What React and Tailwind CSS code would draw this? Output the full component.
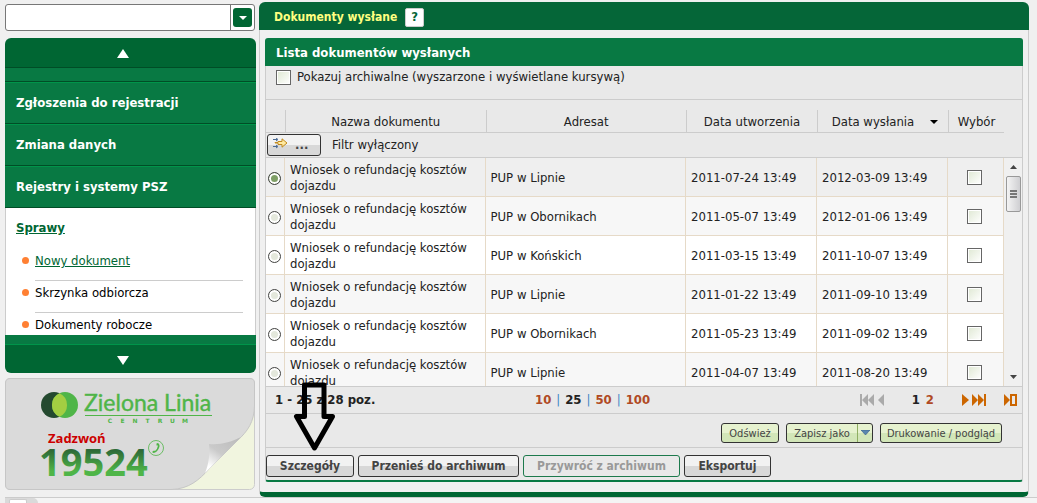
import React, { useState } from "react";

const menuItems = ["Zgłoszenia do rejestracji", "Zmiana danych", "Rejestry i systemy PSZ"];

const subItems = ["Nowy dokument", "Skrzynka odbiorcza", "Dokumenty robocze"];

const documents = [
  { id: 1, office: "PUP w Lipnie", created: "2011-07-24 13:49", sent: "2012-03-09 13:49" },
  { id: 2, office: "PUP w Obornikach", created: "2011-05-07 13:49", sent: "2012-01-06 13:49" },
  { id: 3, office: "PUP w Końskich", created: "2011-03-15 13:49", sent: "2011-10-07 13:49" },
  { id: 4, office: "PUP w Lipnie", created: "2011-01-22 13:49", sent: "2011-09-10 13:49" },
  { id: 5, office: "PUP w Obornikach", created: "2011-05-23 13:49", sent: "2011-09-02 13:49" },
  { id: 6, office: "PUP w Lipnie", created: "2011-04-07 13:49", sent: "2011-08-20 13:49" },
];

function Checkbox(props) {
  return (
    <input
      type="checkbox"
      className="block size-[15px] shrink-0 appearance-none border border-[#666] bg-linear-to-br from-[#dfe8d3] to-white shadow-[inset_0_0_0_1px_#fff] checked:bg-[#7f9f66]"
      {...props}
    />
  );
}

function Columns() {
  return (
    <colgroup>
      <col className="w-[19px]" />
      <col />
      <col />
      <col className="w-[131px]" />
      <col className="w-[131px]" />
      <col className="w-[56px]" />
    </colgroup>
  );
}

function SideMenu() {
  return (
    <nav>
      <button
        aria-label="Przewiń w górę"
        className="flex h-[30px] w-full items-center justify-center rounded-t-md border-b border-[#004d26] bg-[#006633] pr-4"
      >
        <svg width="12" height="9" viewBox="0 0 12 9" className="mt-0.5">
          <path d="M6 0 L12 9 H0 Z" fill="#fff" />
        </svg>
      </button>
      <div className="h-3.5 border-b border-[#004d26] bg-[#087943]" />
      {menuItems.map((item) => (
        <a
          key={item}
          href="#"
          className="flex h-[42px] items-center border-t border-b border-t-[#00944a] border-b-[#004d26] bg-[#087943] px-[11px] text-[13px] font-bold text-white"
        >
          {item}
        </a>
      ))}
      <div className="h-[127px] overflow-hidden border-x border-[#ccc] bg-white">
        <a
          href="#"
          className="mt-3 ml-2.5 block text-[13px] leading-4 font-bold text-[#006633] underline"
        >
          Sprawy
        </a>
        <ul className="mt-[13px] mr-3 ml-4">
          {subItems.map((item, i) => (
            <li key={item} className="flex h-8 gap-[6px]">
              <span className="mt-2 size-[7px] rounded-full bg-[#ff8033]" />
              <a
                href="#"
                className={
                  i === 0
                    ? "flex-1 border-b border-[#ccc] pt-1 text-[13px] leading-4 text-[#006633] underline"
                    : "flex-1 border-b border-[#ccc] pt-1 text-[13px] leading-4 text-black"
                }
              >
                {item}
              </a>
            </li>
          ))}
        </ul>
      </div>
      <div className="h-2.5 border-b border-[#00944a] bg-[#087943]" />
      <button
        aria-label="Przewiń w dół"
        className="flex h-7 w-full items-center justify-center rounded-b-md bg-[#006633] pr-4"
      >
        <svg width="12" height="9" viewBox="0 0 12 9" className="mt-0.5">
          <path d="M0 0 H12 L6 9 Z" fill="#fff" />
        </svg>
      </button>
    </nav>
  );
}

function HotlineBanner() {
  return (
    <a href="#" className="mt-[5px] block" aria-label="Zielona Linia 19524">
      <svg viewBox="0 0 250 112" className="block w-[250px]">
        <defs>
          <linearGradient id="digits" x1="0" y1="0" x2="0" y2="1">
            <stop offset="0.3" stopColor="#2e6b38" />
            <stop offset="0.7" stopColor="#4fb548" />
          </linearGradient>
          <linearGradient id="curl" gradientUnits="userSpaceOnUse" x1="226" y1="56" x2="202" y2="92">
            <stop offset="0" stopColor="#bcbcbc" />
            <stop offset="0.5" stopColor="#cacaca" />
            <stop offset="0.9" stopColor="#ffffff" />
          </linearGradient>
        </defs>
        <rect x="0.5" y="0.5" width="249" height="111" rx="5" fill="#f1f5df" stroke="#ccc" />
        <path
          d="M5 .5 H245 Q249.500 .5 249.500 5 V28 C249 44 243 53 232 63 L204 91 C194 102 184 111 166 111.500 H5 Q.5 111.500 .5 107 V5 Q.5 .5 5 .5 Z"
          fill="#dadada"
          stroke="#c6c6c6"
        />
        <path d="M204 66 C216 67 226 64 236 59 L200 95 C204 86 205 75 204 66 Z" fill="url(#curl)" />
        <circle cx="49" cy="27" r="13" fill="#24492f" />
        <circle cx="60" cy="27" r="13" fill="#4fb548" />
        <path d="M54.500 15.200 A13 13 0 0 1 54.500 38.800 A13 13 0 0 1 54.500 15.200 Z" fill="#a3ce42" />
        <text
          x="79"
          y="33"
          fontFamily="Lato, sans-serif"
          fontSize="23"
          fill="#4fb548"
          stroke="#4fb548"
          strokeWidth="0.4"
        >
          Zielona Linia
        </text>
        <path d="M80 37.500 H207" stroke="#4fb548" />
        {"CENTRUM".split("").map((letter, i) => (
          <text
            key={i}
            x={105 + i * 12.5}
            y="45"
            textAnchor="middle"
            fontFamily="'DejaVu Sans', sans-serif"
            fontWeight="bold"
            fontSize="6"
            fill="#4fb548"
          >
            {letter}
          </text>
        ))}
        <text
          x="43"
          y="65"
          fontFamily="'Open Sans', sans-serif"
          fontWeight="bold"
          fontSize="13"
          fill="#c00"
        >
          Zadzwoń
        </text>
        <text
          x="34"
          y="98"
          fontFamily="'Noto Sans', sans-serif"
          fontWeight="bold"
          fontSize="38"
          fill="url(#digits)"
        >
          19524
        </text>
        <circle cx="151" cy="70" r="7.500" fill="none" stroke="#4fb548" strokeWidth="0.8" />
        <path
          d="M151.500 65.500 L153 65 Q155.500 67 154 70 Q152 74.500 148.500 75 L147 74 L149 72.500 L150 73 Q152.500 71 153 67.500 L151.500 67.500 Z"
          fill="#4fb548"
        />
      </svg>
    </a>
  );
}

function HeaderCell({ children }) {
  return (
    <th className="h-[33px] border-b border-[#ccc] pt-2.5 font-normal">
      <div className="flex h-[22px] items-center justify-center border-l border-[#ccc] pt-px">
        {children}
      </div>
    </th>
  );
}

function DocumentTable({ selected, onSelect }) {
  return (
    <>
      <div className="pr-[18px]">
        <table className="w-full table-fixed border-separate border-spacing-0 text-[13px]">
          <Columns />
          <thead>
            <tr>
              <th className="border-b border-[#ccc]" />
              <HeaderCell>Nazwa dokumentu</HeaderCell>
              <HeaderCell>Adresat</HeaderCell>
              <HeaderCell>Data utworzenia</HeaderCell>
              <HeaderCell>
                <span className="ml-1">Data wysłania</span>
                <svg width="8" height="4" viewBox="0 0 8 4" className="ml-4">
                  <path d="M0 0 H8 L4 4 Z" fill="#000" />
                </svg>
              </HeaderCell>
              <HeaderCell>Wybór</HeaderCell>
            </tr>
          </thead>
        </table>
      </div>
      <div className="flex h-[25px] items-center border-b border-[#ccc]">
        <button
          aria-label="Filtr"
          className="ml-px flex h-[22px] w-[54px] items-center rounded-[3px] border border-[#333] bg-linear-to-b from-[#f2f2f2] from-50% to-[#d8d8d8] to-50% pl-[5px]"
        >
          <svg width="15" height="11" viewBox="0 0 15 11" fill="none" className="mb-1">
            <path d="M0 1.500 H4 M0 8.500 H4 M3 0 L5 1.500 L3 3 M3 7 L5 8.500 L3 10" stroke="#4a6a94" />
            <path d="M5 3.500 H9 V.8 L14 5 L9 9.200 V6.500 H5 V5 H2 V4.500 H5 Z" fill="#ffe9a0" stroke="#c08a20" />
          </svg>
          <span className="ml-[7px] text-[13px] font-bold text-[#444]">...</span>
        </button>
        <span className="ml-[11px] text-[13px]">Filtr wyłączony</span>
      </div>
      <div className="flex h-[228px] overflow-hidden">
        <div className="flex-1 overflow-hidden">
          <table className="w-full table-fixed border-separate border-spacing-0 text-[13px]">
            <Columns />
            <tbody>
              {documents.map((doc, i) => (
                <tr
                  key={doc.id}
                  className={
                    selected === doc.id
                      ? "bg-[#efefef]"
                      : i % 2 === 1
                        ? "bg-[#f7f7f7]"
                        : "bg-white"
                  }
                >
                  <td className="h-[39px] border-r border-b border-[#e6dac8]">
                    <input
                      type="radio"
                      name="document"
                      aria-label={`Dokument ${doc.id}`}
                      checked={selected === doc.id}
                      onChange={() => onSelect(doc.id)}
                      className="mt-0.5 ml-[2px] block size-[13px] appearance-none rounded-full border border-[#444] bg-[#e4e8dc] shadow-[inset_0_0_0_2px_#fff] checked:bg-[#7f9f66]"
                    />
                  </td>
                  <td className="border-r border-b border-[#e6dac8] pt-0.5 pr-4 pl-[5px] leading-4">
                    Wniosek o refundację kosztów dojazdu
                  </td>
                  <td className="border-r border-b border-[#e6dac8] pt-0.5 pl-[5px]">{doc.office}</td>
                  <td className="border-r border-b border-[#e6dac8] pt-0.5 pl-[5px]">{doc.created}</td>
                  <td className="border-r border-b border-[#e6dac8] pt-0.5 pl-[5px]">{doc.sent}</td>
                  <td className="border-r border-b border-[#e6dac8] pl-[19px]">
                    <Checkbox aria-label={`Wybór ${doc.id}`} />
                  </td>
                </tr>
              ))}
            </tbody>
          </table>
        </div>
        <div className="flex w-[18px] flex-col items-center bg-[#f0f0f0]">
          <svg width="7" height="4" viewBox="0 0 7 4" className="mt-[7px] mb-[7px]">
            <path d="M3.500 0 L7 4 H0 Z" fill="#444" />
          </svg>
          <div className="flex h-9 w-[15px] flex-col items-center justify-center gap-px rounded-[2px] border border-[#999] bg-linear-to-r from-[#f4f4f4] to-[#cfcfd2]">
            <span className="h-0.5 w-[7px] bg-[#777]" />
            <span className="h-0.5 w-[7px] bg-[#777]" />
            <span className="h-0.5 w-[7px] bg-[#777]" />
          </div>
          <svg width="7" height="4" viewBox="0 0 7 4" className="mt-auto mb-[7px]">
            <path d="M0 0 H7 L3.500 4 Z" fill="#444" />
          </svg>
        </div>
      </div>
    </>
  );
}

function Pager() {
  return (
    <div className="flex h-[28px] items-center border-y border-[#ccc] text-[13px] font-bold">
      <div className="w-[269px] pl-[9px]">1 - 25 z 28 poz.</div>
      <div className="flex gap-[5px] text-[#b04a24]">
        <a href="#">10</a>
        <span className="font-normal text-[#3c85c6]">|</span>
        <span className="text-[#222]">25</span>
        <span className="font-normal text-[#3c85c6]">|</span>
        <a href="#">50</a>
        <span className="font-normal text-[#3c85c6]">|</span>
        <a href="#">100</a>
      </div>
      <div className="mr-1 ml-auto flex items-center">
        <button aria-label="Pierwsza strona" disabled>
          <svg width="15" height="12" viewBox="0 0 15 12" fill="#aaa">
            <path d="M0 0 H2 V12 H0 Z M8 0 V12 L2 6 Z M14 0 V12 L8 6 Z" />
          </svg>
        </button>
        <button aria-label="Poprzednia strona" disabled className="ml-[3px]">
          <svg width="6" height="12" viewBox="0 0 6 12" fill="#aaa">
            <path d="M6 0 V12 L0 6 Z" />
          </svg>
        </button>
        <span className="ml-7 text-[#222]">1</span>
        <a href="#" className="ml-1.5 text-[#b04a24]">
          2
        </a>
        <button aria-label="Następna strona" className="ml-7">
          <svg width="7" height="12" viewBox="0 0 7 12" fill="#cc6600">
            <path d="M0 0 L7 6 L0 12 Z" />
          </svg>
        </button>
        <button aria-label="Ostatnia strona" className="ml-[3px]">
          <svg width="15" height="12" viewBox="0 0 15 12" fill="#cc6600">
            <path d="M0 0 L6 6 L0 12 Z M6 0 L12 6 L6 12 Z M12 0 H14 V12 H12 Z" />
          </svg>
        </button>
        <button aria-label="Przejdź do strony" className="ml-[17px]">
          <svg width="14" height="12" viewBox="0 0 14 12" fill="#cc6600">
            <path d="M0 0 L6 6 L0 12 Z" />
            <path d="M7 1 H12 V11 H7 Z" fill="none" stroke="#cc6600" strokeWidth="2" />
          </svg>
        </button>
      </div>
    </div>
  );
}

function Toolbar() {
  const green =
    "border border-[#333] bg-linear-to-b from-[#e6f2cf] from-50% to-[#d2e6b8] to-50% text-[11px] text-[#444]";
  return (
    <div className="flex h-[34px] items-center justify-end gap-[7px] border-b border-[#ccc] pt-1 pr-5">
      <button className={`h-5 w-[58px] rounded-[3px] pt-0.5 ${green}`}>Odśwież</button>
      <div className={`flex h-5 w-[87px] rounded-[3px] ${green}`}>
        <button className="w-[70px] pt-0.5">Zapisz jako</button>
        <button
          aria-label="Wybierz format"
          className="flex flex-1 items-center justify-center border-l border-[#8fae62]"
        >
          <svg width="9" height="5" viewBox="0 0 9 5">
            <path d="M0 0 H9 L4.500 5 Z" fill="#5a86b0" stroke="#345a85" strokeWidth="0.6" />
          </svg>
        </button>
      </div>
      <button className={`h-5 w-[122px] rounded-[3px] pt-0.5 ${green}`}>Drukowanie / podgląd</button>
    </div>
  );
}

function Actions() {
  const gray =
    "h-[22px] rounded-[3px] border border-[#333] bg-linear-to-b from-[#f2f2f2] from-50% to-[#d8d8d8] to-50% text-[12px] font-bold text-[#444]";
  return (
    <div className="flex h-8 items-center gap-1 pt-1">
      <div className="relative flex">
        <button className={`w-[88px] ${gray}`}>Szczegóły</button>
        {/* pointer to the details button */}
        <svg
          width="44"
          height="71"
          viewBox="0 0 44 71"
          className="pointer-events-none absolute bottom-[24px] left-[27px]"
          fill="none"
        >
          <path
            d="M11.500 3 H31 V34.500 H39.500 L21.500 66 L3.500 34.500 H11.500 Z"
            stroke="#000"
            strokeWidth="5"
            strokeLinejoin="round"
          />
        </svg>
      </div>
      <button className={`w-[161px] ${gray}`}>Przenieś do archiwum</button>
      <button
        disabled
        className="h-[22px] w-[157px] rounded-[3px] border border-[#1d7a4d] text-[12px] font-bold text-[#999]"
      >
        Przywróć z archiwum
      </button>
      <button className={`w-[87px] ${gray}`}>Eksportuj</button>
    </div>
  );
}

export default function App() {
  const [selected, setSelected] = useState(1);
  const [showArchived, setShowArchived] = useState(false);

  return (
    <div className="bg-[#f0f0f0] font-['DejaVu_Sans_Condensed','DejaVu_Sans',sans-serif] text-[#222]">
      <div className="flex gap-[3px] pt-0.5 pr-2 pl-[5px]">
        <aside className="w-[251px] shrink-0 pt-0.5">
          <div className="mr-px mb-[7px] flex h-[27px] rounded-[3px] border border-[#777] bg-white">
            <input type="text" aria-label="Szukaj" className="min-w-0 flex-1 px-1 text-[13px] outline-none" />
            <div className="flex items-center border-l border-[#777] px-0.5">
              <button
                aria-label="Rozwiń"
                className="flex size-[19px] items-center justify-center rounded-[3px] bg-[#006633]"
              >
                <svg width="8" height="4" viewBox="0 0 8 4">
                  <path d="M0 0 H8 L4 4 Z" fill="#fff" />
                </svg>
              </button>
            </div>
          </div>
          <SideMenu />
          <HotlineBanner />
        </aside>

        <main className="flex min-w-0 flex-1 flex-col">
          <header className="flex h-7 items-center gap-2 rounded-t-md bg-[#056638] pt-0.5 pl-[15px]">
            <h1 className="text-[12px] font-bold text-[#ffff80]">Dokumenty wysłane</h1>
            <button
              aria-label="Pomoc"
              className="size-[19px] rounded-[2px] border border-[#ccc] bg-white text-[13px] leading-4 font-bold text-[#056638]"
            >
              ?
            </button>
          </header>
          <div className="rounded-b-md border-x border-b-5 border-x-[#ccc] border-b-[#006633] px-[5px] pt-2 pb-2.5">
            <section>
              <h2 className="flex h-7 items-center rounded-t-[3px] bg-[#087943] pt-0.5 pl-[11px] text-[13px] font-bold text-white">
                Lista dokumentów wysłanych
              </h2>
              <div className="rounded-b-[3px] border-x border-b-2 border-x-[#ccc] border-b-[#087943] bg-[#e9e9e9]">
                <div className="h-[34px] border-b border-[#ccc] pt-[3px] pl-2.5">
                  <label className="flex w-fit items-center gap-[6px] text-[13px] leading-4">
                    <Checkbox
                      checked={showArchived}
                      onChange={(e) => setShowArchived(e.target.checked)}
                    />
                    Pokazuj archiwalne (wyszarzone i wyświetlane kursywą)
                  </label>
                </div>
                <DocumentTable selected={selected} onSelect={setSelected} />
                <Pager />
                <Toolbar />
                <Actions />
              </div>
            </section>
          </div>
        </main>
      </div>
      <footer className="ml-[5px] flex h-[6px] border-t border-[#ccc] bg-[#f4f4f4]">
        <div className="w-[33px] rounded-tr-md bg-[#dadada] pt-px pl-1">
          <div className="h-1 w-[18px] rounded-t-[2px] border-x border-t border-[#ccc] bg-white" />
        </div>
      </footer>
    </div>
  );
}
